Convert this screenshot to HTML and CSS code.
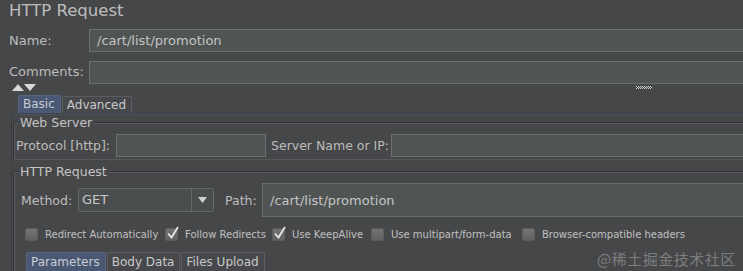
FILE: index.html
```html
<!DOCTYPE html>
<html>
<head>
<meta charset="utf-8">
<link rel="stylesheet" href="styles.css">
</head>
<body>
<div class="page">
  <div class="title">HTTP Request</div>
  <div class="row name-row">
    <label class="lbl">Name:</label>
    <div class="input name-input">/cart/list/promotion</div>
  </div>
  <div class="row comments-row">
    <label class="lbl">Comments:</label>
    <div class="input comments-input"></div>
  </div>
  <div class="splitter">
    <svg class="arrows" width="24" height="7" viewBox="0 0 24 7"><polygon points="0,7 6,0 12,7" fill="#d8d8d8"/><polygon points="12,0 24,0 18,7" fill="#d8d8d8"/></svg>
    <svg class="grip" width="16" height="4" viewBox="0 0 16 4">
      <g fill="#d0d0d0"><rect x="0" y="0" width="1" height="1"/><rect x="2" y="0" width="1" height="1"/><rect x="4" y="0" width="1" height="1"/><rect x="6" y="0" width="1" height="1"/><rect x="8" y="0" width="1" height="1"/><rect x="10" y="0" width="1" height="1"/><rect x="12" y="0" width="1" height="1"/><rect x="14" y="0" width="1" height="1"/>
      <rect x="1" y="1" width="1" height="1"/><rect x="3" y="1" width="1" height="1"/><rect x="5" y="1" width="1" height="1"/><rect x="7" y="1" width="1" height="1"/><rect x="9" y="1" width="1" height="1"/><rect x="11" y="1" width="1" height="1"/><rect x="13" y="1" width="1" height="1"/><rect x="15" y="1" width="1" height="1"/>
      <rect x="0" y="2" width="1" height="1"/><rect x="2" y="2" width="1" height="1"/><rect x="4" y="2" width="1" height="1"/><rect x="6" y="2" width="1" height="1"/><rect x="8" y="2" width="1" height="1"/><rect x="10" y="2" width="1" height="1"/><rect x="12" y="2" width="1" height="1"/><rect x="14" y="2" width="1" height="1"/></g>
    </svg>
  </div>
  <div class="tabs top-tabs">
    <div class="tab selected">Basic</div>
    <div class="tab">Advanced</div>
  </div>
  <div class="panel">
    <div class="fieldset web-server">
      <div class="legend">Web Server</div>
      <div class="fs-row">
        <label class="lbl2 proto-lbl">Protocol [http]:</label>
        <div class="input proto-input"></div>
        <label class="lbl2 server-lbl">Server Name or IP:</label>
        <div class="input server-input"></div>
      </div>
    </div>
    <div class="fieldset http-req">
      <div class="legend">HTTP Request</div>
      <div class="fs-row method-row">
        <label class="lbl2 method-lbl">Method:</label>
        <div class="select">
          <span class="select-val">GET</span>
          <span class="select-btn"><svg width="9" height="6" viewBox="0 0 9 6"><polygon points="0,0 9,0 4.5,6" fill="#d0d0d0"/></svg></span>
        </div>
        <label class="lbl2 path-lbl">Path:</label>
        <div class="input path-input">/cart/list/promotion</div>
      </div>
      <div class="checks">
        <span class="cb"></span><span class="cb-lbl w1">Redirect Automatically</span>
        <span class="cb checked"><svg width="14" height="14" viewBox="0 0 14 14"><path d="M2 7.5 L5.5 11.5 L12 1" fill="none" stroke="#e6e6e6" stroke-width="1.8"/></svg></span><span class="cb-lbl w2">Follow Redirects</span>
        <span class="cb checked"><svg width="14" height="14" viewBox="0 0 14 14"><path d="M2 7.5 L5.5 11.5 L12 1" fill="none" stroke="#e6e6e6" stroke-width="1.8"/></svg></span><span class="cb-lbl w3">Use KeepAlive</span>
        <span class="cb"></span><span class="cb-lbl w4">Use multipart/form-data</span>
        <span class="cb"></span><span class="cb-lbl">Browser-compatible headers</span>
      </div>
      <div class="tabs bottom-tabs">
        <div class="tab selected">Parameters</div>
        <div class="tab">Body Data</div>
        <div class="tab">Files Upload</div>
      </div>
    </div>
  </div>
  <div class="watermark">@稀土掘金技术社区</div>
</div>
</body>
</html>
```
FILE: styles.css
```css
html, body {
  margin: 0;
  padding: 0;
  background: #464749;
  overflow: hidden;
}
.page {
  position: relative;
  width: 743px;
  height: 271px;
  overflow: hidden;
  font-family: "DejaVu Sans", sans-serif;
  color: #bdbdbd;
}
.title {
  font-size: 16.5px;
  height: 22px;
  line-height: 22px;
  padding-left: 9px;
}
.row {
  display: flex;
  align-items: center;
}
.name-row { margin-top: 7px; height: 23px; }
.comments-row { margin-top: 8px; height: 23px; }
.lbl {
  width: 80px;
  padding-left: 9px;
  font-size: 13px;
  flex: none;
}
.input {
  box-sizing: border-box;
  background: #505554;
  border: 1px solid #6c6f70;
  border-right: none;
  color: #c4c4c4;
  font-size: 13px;
  display: flex;
  align-items: center;
  padding-left: 7px;
}
.name-input, .comments-input {
  flex: 1;
  height: 23px;
}
.comments-row .comments-input { margin-top: 1px; }
.splitter {
  position: relative;
  height: 12px;
}
.arrows { position: absolute; left: 12px; top: 1px; }
.grip { position: absolute; left: 636px; top: 3px; }
.tabs {
  display: flex;
  align-items: flex-end;
}
.top-tabs {
  padding-left: 18px;
  height: 18px;
}
.tab {
  box-sizing: border-box;
  border: 1px solid #5c5d60;
  border-bottom: none;
  border-radius: 2px 2px 0 0;
  font-size: 12px;
  padding: 0 5px 0 4px;
  margin-right: 1px;
  color: #c8c8c8;
  background: #47484b;
}
.top-tabs .tab { height: 17px; line-height: 17px; }
.top-tabs .tab.selected { height: 18px; }
.tab.selected {
  background: #4a5873;
  border-color: #56637d;
  color: #c8ccd4;
}
.panel {
  border-top: 1px solid #3e4250;
  box-shadow: inset 0 1px 0 #505157;
  margin-left: 11px;
  border-left: 1px solid #3c3d3f;
  padding-left: 1px;
  height: 200px;
}
.fieldset {
  position: relative;
  border-top: 1px solid #363739;
  box-shadow: inset 0 1px 0 #58595c, inset 1px 0 0 #58595c;
  border-left: 1px solid #363739;
}
.web-server {
  margin-top: 8px;
  height: 36px;
  border-bottom: 1px solid #58595c;
}
.legend {
  position: absolute;
  top: -8px;
  left: 5px;
  background: #464749;
  padding: 0 1px;
  font-size: 12.5px;
  line-height: 15px;
  color: #c4c4c4;
}
.fs-row {
  display: flex;
  align-items: center;
}
.web-server .fs-row {
  padding-top: 11px;
}
.lbl2 {
  font-size: 12.5px;
  flex: none;
}
.proto-lbl { margin-left: 2px; width: 100px; }
.proto-input { width: 150px; height: 23px; border-right: 1px solid #6c6f70; }
.server-lbl { margin-left: 5px; width: 120px; }
.server-input { flex: 1; height: 23px; }
.http-req {
  margin-top: 11px;
  height: 110px;
}
.method-row {
  padding-top: 11px;
}
.method-lbl { margin-left: 7px; width: 57px; }
.select {
  box-sizing: border-box;
  width: 136px;
  height: 24px;
  border: 1px solid #666869;
  border-radius: 3px;
  display: flex;
  background: #4a4d4e;
  font-size: 13px;
  color: #c8c8c8;
}
.select-val { flex: 1; padding-left: 3px; line-height: 22px; }
.select-btn {
  width: 21px;
  border-left: 1px solid #666869;
  display: flex;
  align-items: center;
  justify-content: center;
}
.path-lbl { margin-left: 11px; width: 37px; }
.path-input { flex: 1; height: 34px; }
.checks {
  display: flex;
  align-items: center;
  margin-top: 10px;
  padding-left: 11px;
  height: 14px;
  font-size: 10px;
  color: #c0c0c0;
}
.cb {
  box-sizing: border-box;
  width: 13px;
  height: 13px;
  background: linear-gradient(#727476, #5e6062);
  border: 1px solid #5a5c5e;
  border-radius: 2px;
  position: relative;
  flex: none;
}
.cb svg { position: absolute; left: 0; top: -3px; }
.cb-lbl { margin-left: 7px; white-space: nowrap; flex: none; }
.w1 { width: 120px; }
.w2 { width: 87px; }
.w3 { width: 79px; }
.w4 { width: 131px; }
.bottom-tabs {
  margin-top: 11px;
  padding-left: 12px;
  height: 20px;
}
.bottom-tabs .tab { height: 20px; line-height: 19px; font-size: 12px; }
.watermark {
  position: absolute;
  left: 597px;
  top: 248px;
  font-family: "Noto Sans CJK SC", sans-serif;
  font-size: 15px;
  color: #8a8b8d;
  opacity: 0.8;
  letter-spacing: 0.5px;
}
```
